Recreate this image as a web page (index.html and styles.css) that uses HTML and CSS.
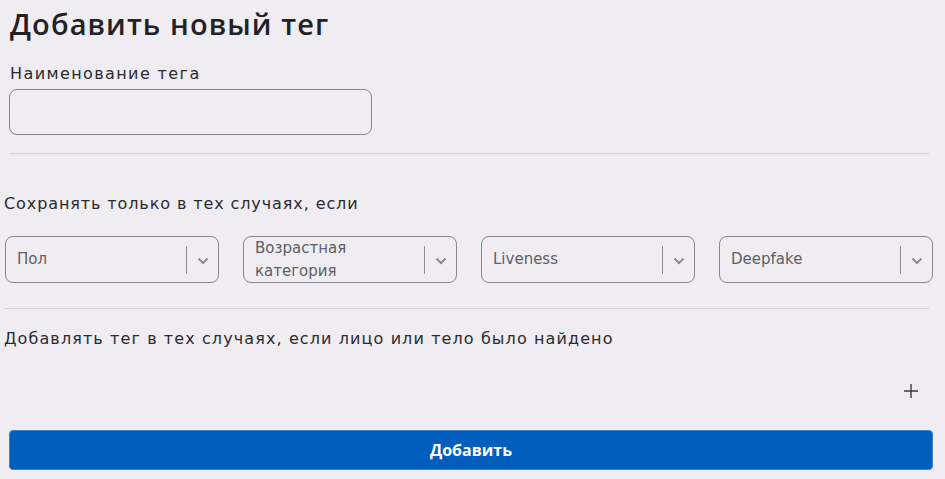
FILE: index.html
```html
<!DOCTYPE html>
<html lang="ru">
<head>
    <meta charset="UTF-8">
    <meta name="viewport" content="width=device-width, initial-scale=1.0">
    <title>Добавить новый тег</title>
    <link rel="stylesheet" href="styles.css">
</head>
<body>
    <form class="tag-form">
        <section class="name-block">
            <h1>Добавить новый тег</h1>
            <label for="tagName">Наименование тега</label>
            <input type="text" id="tagName" class="text-input">
        </section>
        <hr class="divider divider-first">

        <section class="filter-block">
            <p class="block-title">Сохранять только в тех случаях, если</p>
            <div class="select-row">
                <div class="select-box">
                    <span class="select-value">Пол</span>
                    <span class="select-sep"></span>
                    <svg class="select-arrow" viewBox="0 0 12 8" width="12" height="8"><path d="M1.5 1.5 L6 6 L10.5 1.5" fill="none" stroke="#8c8c91" stroke-width="2"/></svg>
                </div>
                <div class="select-box">
                    <span class="select-value">Возрастная категория</span>
                    <span class="select-sep"></span>
                    <svg class="select-arrow" viewBox="0 0 12 8" width="12" height="8"><path d="M1.5 1.5 L6 6 L10.5 1.5" fill="none" stroke="#8c8c91" stroke-width="2"/></svg>
                </div>
                <div class="select-box">
                    <span class="select-value">Liveness</span>
                    <span class="select-sep"></span>
                    <svg class="select-arrow" viewBox="0 0 12 8" width="12" height="8"><path d="M1.5 1.5 L6 6 L10.5 1.5" fill="none" stroke="#8c8c91" stroke-width="2"/></svg>
                </div>
                <div class="select-box">
                    <span class="select-value">Deepfake</span>
                    <span class="select-sep"></span>
                    <svg class="select-arrow" viewBox="0 0 12 8" width="12" height="8"><path d="M1.5 1.5 L6 6 L10.5 1.5" fill="none" stroke="#8c8c91" stroke-width="2"/></svg>
                </div>
            </div>
            <hr class="divider">
        </section>

        <section class="found-block">
            <p class="block-title">Добавлять тег в тех случаях, если лицо или тело было найдено</p>
            <div class="add-row">
                <button type="button" class="add-rule">
                    <svg viewBox="0 0 16 16" width="16" height="16"><path d="M8 1 V15 M1 8 H15" stroke="#3a3a3f" stroke-width="1.4"/></svg>
                </button>
            </div>
            <button type="submit" class="submit-btn">Добавить</button>
        </section>
    </form>
</body>
</html>
```

FILE: styles.css
```css
body {
    margin: 0;
    background-color: #efedf2;
    font-family: "DejaVu Sans", Verdana, sans-serif;
    color: #2b2a30;
}
.tag-form {
    width: 929px;
}
.name-block {
    padding-left: 9px;
}
h1 {
    margin: 0;
    padding: 4px 0 0 1px;
    font-family: "Open Sans", Arial, sans-serif;
    font-size: 29px;
    font-weight: 600;
    letter-spacing: 1.1px;
    line-height: 40px;
    color: #222126;
}
label {
    display: block;
    margin-top: 18px;
    padding-left: 1px;
    font-size: 16px;
    letter-spacing: 1.4px;
    line-height: 24px;
    color: #2b2a30;
}
.text-input {
    display: block;
    box-sizing: border-box;
    width: 363px;
    height: 46px;
    margin-top: 3px;
    border: 1px solid #86858b;
    border-radius: 8px;
    background: transparent;
}
.divider {
    border: 0;
    border-top: 1px solid #d3d1d7;
    margin: 18px 0 0;
}
.divider-first {
    margin-left: 9px;
}
.filter-block {
    padding-left: 4px;
}
.block-title {
    margin: 0;
    padding-top: 38px;
    font-size: 16px;
    letter-spacing: 0.9px;
    line-height: 24px;
    color: #2b2a30;
}
.select-row {
    display: grid;
    grid-template-columns: repeat(4, 214px);
    column-gap: 24px;
    margin-top: 20px;
    padding-left: 1px;
}
.select-box {
    box-sizing: border-box;
    height: 47px;
    display: flex;
    align-items: center;
    border: 1px solid #86858b;
    border-radius: 8px;
    padding-left: 11px;
}
.select-value {
    flex: 1;
    font-size: 15px;
    line-height: 23px;
    color: #5f5e64;
}
.select-sep {
    width: 1px;
    height: 28px;
    background: #8c8c91;
}
.select-arrow {
    margin: 2px 9px 0 10px;
}
.filter-block .divider {
    margin-top: 25px;
}
.found-block .block-title {
    padding: 18px 0 0 4px;
    letter-spacing: 1.1px;
}
.add-row {
    display: flex;
    justify-content: flex-end;
    margin-top: 32px;
    padding-right: 10px;
}
.add-row .add-rule {
    border: 0;
    background: none;
    padding: 0;
    width: 16px;
    height: 16px;
    cursor: pointer;
}
.submit-btn {
    display: block;
    box-sizing: border-box;
    width: 924px;
    height: 40px;
    margin: 31px 0 0 9px;
    border: 1px solid #3f80cf;
    border-radius: 4px;
    background-color: #005ebd;
    color: #fff;
    font-family: "Open Sans", Arial, sans-serif;
    font-size: 16px;
    font-weight: 700;
    letter-spacing: 0;
    cursor: pointer;
}
```
